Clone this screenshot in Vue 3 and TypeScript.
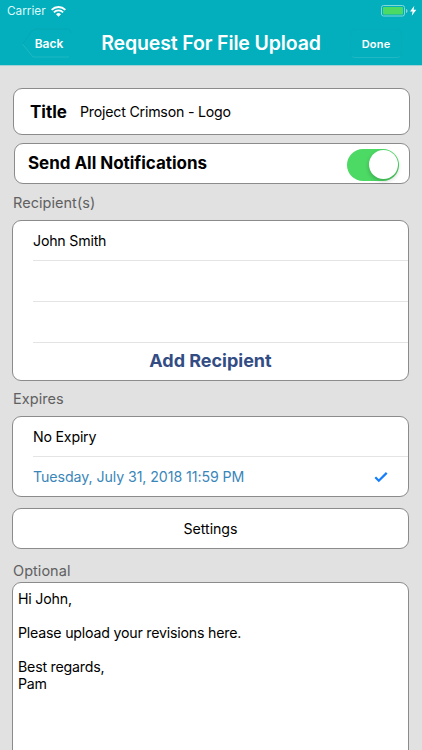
<script setup lang="ts">
import { ref } from 'vue'

const title = ref('Project Crimson - Logo')
const notifyAll = ref(true)
const recipients = ref<string[]>(['John Smith', '', ''])
const expiry = ref(1)
const expiryOptions: string[] = ['No Expiry', 'Tuesday, July 31, 2018 11:59 PM']
const message = ref('Hi John,\n\nPlease upload your revisions here.\n\nBest regards,\nPam')
</script>

<template>
  <div class="screen">
    <header class="header">
      <div class="status">
        <span class="carrier">Carrier</span>
        <svg class="wifi" width="15" height="11" viewBox="0 0 15 11">
          <path d="M0.6 3.9a9.8 9.8 0 0 1 13.8 0" />
          <path d="M2.9 6.3a6.5 6.5 0 0 1 9.2 0" />
          <path class="dot" d="M7.5 10.7 5 8.2a3.6 3.6 0 0 1 5 0z" />
        </svg>
        <svg class="battery" width="36" height="12" viewBox="0 0 36 12">
          <rect class="shell" x="0.5" y="0.5" width="23" height="10.500" rx="2" />
          <rect class="charge" x="2" y="2" width="20" height="7.500" rx="0.8" />
          <path class="cap" d="M25 4v4c1-.3 1.500-1 1.500-2s-.5-1.700-1.500-2z" />
          <path class="bolt" d="M33.300 0.800 29 6.400h2.600L30.800 10.800 35.300 4.800h-2.700z" />
        </svg>
      </div>
      <nav class="nav">
        <button class="back">
          <svg width="52" height="32" viewBox="0 0 52 32">
            <path class="edge" d="M48 29H12L1.500 16" />
            <path class="shade" d="M1.500 16 11 3 14 1h32q4 0 4 4" />
          </svg>
          <span>Back</span>
        </button>
        <h1>Request For File Upload</h1>
        <button class="done">Done</button>
      </nav>
    </header>

    <main class="content">
      <section class="card title-card">
        <strong>Title</strong>
        <span class="title-text">{{ title }}</span>
      </section>
      <section class="card notify-card">
        <strong>Send All Notifications</strong>
        <span class="switch" :class="{ on: notifyAll }" @click="notifyAll = !notifyAll"><i></i></span>
      </section>

      <h2>Recipient(s)</h2>
      <section class="card list recipients">
        <div v-for="(name, i) in recipients" :key="i" class="row">{{ name }}</div>
        <button class="add">Add Recipient</button>
      </section>

      <h2 class="expires">Expires</h2>
      <section class="card list options">
        <div
          v-for="(option, i) in expiryOptions"
          :key="option"
          class="row"
          :class="{ selected: expiry === i }"
          @click="expiry = i"
        >
          <span>{{ option }}</span>
          <svg v-if="expiry === i" width="14" height="12" viewBox="0 0 14 12">
            <path d="M1.300 6.300 4.800 9.800 12.700 1.900" />
          </svg>
        </div>
      </section>

      <button class="card settings">Settings</button>

      <h2 class="optional">Optional</h2>
      <section class="card message">{{ message }}</section>
    </main>
  </div>
</template>

<style>
body {
  margin: 0;
  overflow: hidden;
}
</style>

<style scoped>
.screen {
  display: flex;
  flex-direction: column;
  box-sizing: border-box;
  height: 750px;
  overflow: hidden;
  background: #e1e1e1;
  color: #000;
  font-family: Inter, "Liberation Sans", sans-serif;
  font-size: 14.2px;
  letter-spacing: -0.21px;
}
button {
  margin: 0;
  padding: 0;
  border: 0;
  background: none;
  font: inherit;
  letter-spacing: inherit;
  color: inherit;
}
.header {
  flex: none;
  height: 65px;
  border-bottom: 1px solid #a5cfd2;
  box-sizing: content-box;
  background: #03afbc;
  color: #fff;
  letter-spacing: 0;
}
.status {
  display: flex;
  align-items: center;
  height: 22px;
  padding: 0 5px 0 7px;
}
.carrier {
  font-size: 11.8px;
  letter-spacing: 0;
  color: #dcf8f9;
}
.wifi {
  margin-left: 5px;
  fill: none;
  stroke: #fff;
  stroke-width: 1.9;
}
.wifi .dot {
  fill: #fff;
  stroke: none;
}
.battery {
  margin-left: auto;
}
.shell {
  fill: none;
  stroke: #7fd8da;
}
.charge {
  fill: #4cd964;
}
.cap {
  fill: #7fd8da;
}
.bolt {
  fill: #fff;
}
.nav {
  display: grid;
  grid-template-columns: 80px 1fr 80px;
  align-items: center;
  height: 43px;
}
.back {
  display: grid;
  width: 52px;
  height: 32px;
  margin-left: 21px;
  place-items: center;
  font-size: 12px;
  font-weight: 600;
}
.back > * {
  grid-area: 1 / 1;
}
.back span {
  padding-left: 4px;
}
.back svg {
  fill: none;
}
.edge {
  stroke: #1fb8c4;
}
.shade {
  stroke: #05a8b5;
}
h1 {
  margin: 0;
  padding-bottom: 2px;
  font-size: 19.5px;
  font-weight: 600;
  letter-spacing: -0.14px;
  text-align: center;
  white-space: nowrap;
}
.done {
  width: 52px;
  height: 29px;
  margin-left: 8px;
  border: 1px solid #05acb9;
  border-bottom-color: #1fb7c3;
  border-radius: 5px;
  font-size: 11px;
  font-weight: 600;
  letter-spacing: 0.2px;
}
.content {
  display: flex;
  flex: 1;
  flex-direction: column;
  min-height: 0;
  padding: 22px 13px 0 12px;
}
.card {
  flex: none;
  box-sizing: border-box;
  border: 1px solid #8b8b8b;
  border-radius: 9px;
  background: #fff;
}
.title-card,
.notify-card {
  display: flex;
  align-items: center;
}
.title-card {
  height: 47px;
  margin: 0 -1px 0 1px;
  padding: 0 16px;
}
.title-text {
  margin-left: 13px;
}
strong {
  font-size: 17px;
  font-weight: 700;
  letter-spacing: 0;
}
.notify-card {
  justify-content: space-between;
  height: 41px;
  margin: 8px -1px 0 2px;
  padding: 0 10px 0 13px;
}
.notify-card strong {
  padding-bottom: 2px;
  letter-spacing: -0.03px;
}
.switch {
  display: flex;
  box-sizing: border-box;
  width: 52px;
  height: 32px;
  margin-top: 2px;
  padding: 1.5px;
  border-radius: 16px;
  background: #ddd;
}
.switch.on {
  justify-content: flex-end;
  background: #4cd964;
}
.switch i {
  width: 29px;
  height: 29px;
  border-radius: 50%;
  background: #fff;
  box-shadow: 0 2px 4px rgba(0, 0, 0, 0.22);
}
h2 {
  flex: none;
  height: 36px;
  margin: 0;
  padding-left: 1px;
  font-size: 14.5px;
  font-weight: 400;
  line-height: 37px;
  letter-spacing: 0.04px;
  color: #606060;
}
.list {
  display: flex;
  flex-direction: column;
  padding-left: 20px;
}
.row {
  display: flex;
  flex: none;
  align-items: center;
  box-sizing: border-box;
  height: 41px;
  border-bottom: 1px solid #e4e4e4;
}
.row:first-child {
  height: 40px;
  padding-bottom: 1px;
}
.recipients {
  height: 161px;
}
.add {
  flex: 1;
  margin-left: -20px;
  padding-bottom: 3px;
  font-size: 18px;
  font-weight: 700;
  letter-spacing: -0.02px;
  color: #334d84;
}
.expires {
  height: 35px;
  line-height: 36px;
}
.options {
  height: 81px;
}
.options .row:last-child {
  justify-content: space-between;
  height: 39px;
  padding-right: 20px;
  border: 0;
  letter-spacing: -0.08px;
}
.selected {
  color: #3a86b9;
}
.selected svg {
  fill: none;
  stroke: #147efb;
  stroke-width: 2.2;
}
.settings {
  height: 41px;
  margin-top: 11px;
  letter-spacing: -0.05px;
}
.optional {
  height: 33px;
  line-height: 44px;
}
.message {
  height: 200px;
  padding: 7px 5px;
  line-height: 17px;
  white-space: pre-wrap;
}
</style>
